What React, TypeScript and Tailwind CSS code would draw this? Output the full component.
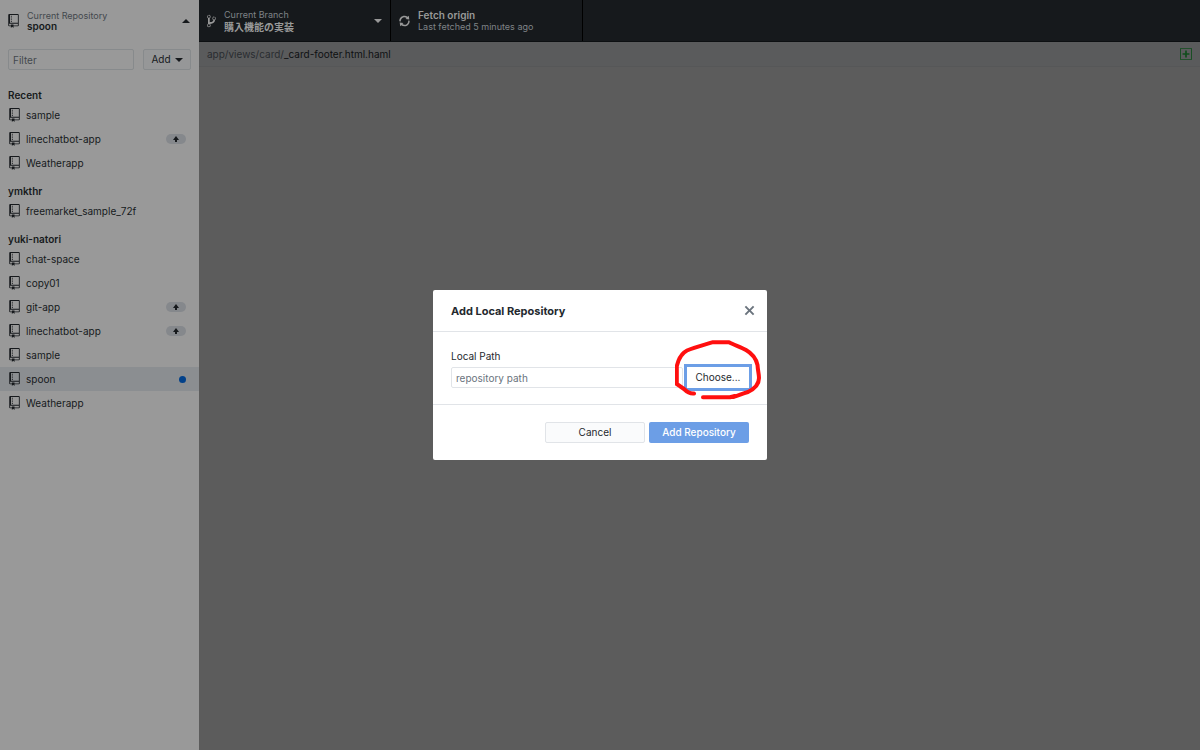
import { useState } from "react";
import { clsx } from "clsx";

type Repo = { name: string; ahead?: boolean; changed?: boolean };

const groups: { label: string; repos: Repo[] }[] = [
  {
    label: "Recent",
    repos: [{ name: "sample" }, { name: "linechatbot-app", ahead: true }, { name: "Weatherapp" }],
  },
  { label: "ymkthr", repos: [{ name: "freemarket_sample_72f" }] },
  {
    label: "yuki-natori",
    repos: [
      { name: "chat-space" },
      { name: "copy01" },
      { name: "git-app", ahead: true },
      { name: "linechatbot-app", ahead: true },
      { name: "sample" },
      { name: "spoon", changed: true },
      { name: "Weatherapp" },
    ],
  },
];

const icons = {
  repo: {
    box: "0 0 12 16",
    d: "M4 9H3V8h1v1zm0-3H3v1h1V6zm0-2H3v1h1V4zm0-2H3v1h1V2zm8-1v12c0 .55-.45 1-1 1H6v2l-1.5-1.5L3 16v-2H1c-.55 0-1-.45-1-1V1c0-.55.45-1 1-1h10c.55 0 1 .45 1 1zm-1 10H1v2h2v-1h3v1h5v-2zm0-10H2v9h9V1z",
  },
  branch: {
    box: "0 0 10 16",
    d: "M10 5c0-1.11-.89-2-2-2a1.993 1.993 0 0 0-1 3.72v.3c-.02.52-.23.98-.63 1.38-.4.4-.86.61-1.38.63-.83.02-1.48.16-2 .45V4.72a1.993 1.993 0 0 0-1-3.72C.88 1 0 1.89 0 3a2 2 0 0 0 1 1.72v6.56c-.59.35-1 .99-1 1.72 0 1.11.89 2 2 2 1.11 0 2-.89 2-2 0-.53-.2-1-.53-1.36.09-.06.48-.41.59-.47.25-.11.56-.17.94-.17 1.05-.05 1.95-.45 2.75-1.25S8.95 7.77 9 6.73h-.02C9.59 6.37 10 5.73 10 5zM2 1.8c.66 0 1.2.55 1.2 1.2 0 .65-.55 1.2-1.2 1.2C1.35 4.2.8 3.65.8 3c0-.65.55-1.2 1.2-1.2zm0 12.41c-.66 0-1.2-.55-1.2-1.2 0-.65.55-1.2 1.2-1.2.65 0 1.2.55 1.2 1.2 0 .65-.55 1.2-1.2 1.2zm6-8c-.66 0-1.2-.55-1.2-1.2 0-.65.55-1.2 1.2-1.2.65 0 1.2.55 1.2 1.2 0 .65-.55 1.2-1.2 1.2z",
  },
  sync: {
    box: "0 0 12 16",
    d: "M10.24 7.4a4.15 4.15 0 0 1-1.2 3.6 4.346 4.346 0 0 1-5.41.54L4.8 10.4.5 9.8l.6 4.2 1.31-1.26c2.36 1.74 5.7 1.57 7.84-.54a5.876 5.876 0 0 0 1.74-4.46l-1.75-.34zM2.96 5a4.346 4.346 0 0 1 5.41-.54L7.2 5.6l4.3.6-.6-4.2-1.31 1.26c-2.36-1.74-5.7-1.57-7.85.54C.5 5.03-.06 6.65.01 8.26l1.75.35A4.17 4.17 0 0 1 2.96 5z",
  },
  close: {
    box: "0 0 12 16",
    d: "M7.48 8l3.75 3.75-1.48 1.48L6 9.48l-3.75 3.75-1.48-1.48L4.52 8 .77 4.25l1.48-1.48L6 6.52l3.75-3.75 1.48 1.48L7.48 8z",
  },
  added: {
    box: "0 0 14 16",
    d: "M13 1H1c-.55 0-1 .45-1 1v12c0 .55.45 1 1 1h12c.55 0 1-.45 1-1V2c0-.55-.45-1-1-1zm0 13H1V2h12v12zM6 9H3V7h3V4h2v3h3v2H8v3H6V9z",
  },
  arrowUp: { box: "0 0 6 6", d: "M3 0L0 4h2v2h2V4h2L3 0z" },
  caretDown: { box: "0 0 8 4", d: "M0 0l4 4 4-4z" },
  caretUp: { box: "0 0 8 4", d: "M0 4l4-4 4 4z" },
};

const Icon = ({ name, className }: { name: keyof typeof icons; className?: string }) => (
  <svg viewBox={icons[name].box} className={clsx("shrink-0 fill-current", className)} aria-hidden="true">
    <path d={icons[name].d} />
  </svg>
);

const Sidebar = () => {
  const [filter, setFilter] = useState("");

  return (
    <aside className="w-[199px] shrink-0 bg-[#999999] text-[#16191c]">
      <button className="flex h-[41px] w-full items-center pl-2 pr-[9px] text-left">
        <Icon name="repo" className="h-[14px] w-[11px]" />
        <span className="ml-2 flex-1 leading-[11px]">
          <span className="block text-[9px] text-[#43484d]">Current Repository</span>
          <span className="block font-semibold">spoon</span>
        </span>
        <Icon name="caretUp" className="h-1 w-2" />
      </button>

      <div className="flex gap-[9px] px-2 pt-2">
        <input
          aria-label="Filter"
          placeholder="Filter"
          value={filter}
          onChange={(e) => setFilter(e.target.value)}
          className="h-[21px] min-w-0 flex-1 rounded-xs border border-[#878a8c] px-1 placeholder:text-[#43484d] focus:outline-none"
        />
        <button className="flex h-[21px] w-12 items-center justify-center gap-1 rounded-xs border border-[#878a8c] bg-[#969798]">
          Add
          <Icon name="caretDown" className="h-1 w-2" />
        </button>
      </div>

      <div className="pt-[9px]">
        {groups.map((group) => (
          <section key={group.label}>
            <h2 className="flex h-6 items-end px-2 font-semibold">{group.label}</h2>
            <ul>
              {group.repos
                .filter((repo) => repo.name.includes(filter))
                .map((repo) => (
                  <li key={repo.name}>
                    <button
                      className={clsx(
                        "flex h-6 w-full items-center pl-[9px] pr-[13px] text-left",
                        repo.changed && "bg-[#8b8e91]"
                      )}
                    >
                      <Icon name="repo" className="h-[14px] w-[11px]" />
                      <span className="ml-[6px] flex-1">{repo.name}</span>
                      {repo.ahead && (
                        <span className="flex h-[10px] w-5 items-center justify-center rounded-full bg-[#85888c]">
                          <Icon name="arrowUp" className="h-[6px] w-[6px]" />
                        </span>
                      )}
                      {repo.changed && <span className="h-[7px] w-[7px] rounded-full bg-[#02418a]" />}
                    </button>
                  </li>
                ))}
            </ul>
          </section>
        ))}
      </div>
    </aside>
  );
};

const Toolbar = () => (
  <header className="flex h-[42px] border-b border-[#0d1012] bg-[#16191c] text-[#999999]">
    <button className="flex w-48 items-center border-r border-black px-2 text-left">
      <Icon name="branch" className="h-[14px] w-[9px]" />
      <span className="ml-2 flex-1 leading-[13px]">
        <span className="block text-[9px] text-[#7f8387]">Current Branch</span>
        <span className="block font-bold">購入機能の実装</span>
      </span>
      <Icon name="caretDown" className="h-1 w-2" />
    </button>
    <button className="flex w-48 items-center border-r border-black pl-2 text-left">
      <Icon name="sync" className="h-[14px] w-[11px]" />
      <span className="ml-2 leading-3">
        <span className="block font-semibold">Fetch origin</span>
        <span className="block text-[9px] text-[#7f8387]">Last fetched 5 minutes ago</span>
      </span>
    </button>
  </header>
);

const AddRepositoryDialog = () => {
  const [path, setPath] = useState("");

  return (
    <div
      role="dialog"
      aria-labelledby="dialog-title"
      className="relative w-[334px] rounded-xs bg-white text-[#24292e]"
    >
      <div className="flex h-[42px] items-center justify-between border-b border-[#e1e4e8] pl-[18px] pr-3">
        <h1 id="dialog-title" className="pt-px text-[11px] font-bold">
          Add Local Repository
        </h1>
        <button aria-label="Close" className="text-[#6a737d]">
          <Icon name="close" className="h-[15px] w-[11px]" />
        </button>
      </div>

      <div className="h-[73px] border-b border-[#e1e4e8] px-[18px] pt-[18px]">
        <label htmlFor="local-path" className="block leading-3">
          Local Path
        </label>
        <div className="mt-[5px] flex gap-1">
          <input
            id="local-path"
            placeholder="repository path"
            value={path}
            onChange={(e) => setPath(e.target.value)}
            className="h-[21px] min-w-0 flex-1 rounded-xs border border-[#e1e4e8] px-1 placeholder:text-[#6a737d] focus:outline-none"
          />
          <button className="h-[21px] w-[62px] ring-3 ring-[#6c9ee6]">Choose...</button>
        </div>
      </div>

      <div className="flex h-[55px] items-center justify-end gap-1 px-[18px]">
        <button className="h-[21px] w-[100px] rounded-xs border border-[#e1e4e8] bg-[#fafbfc]">Cancel</button>
        <button disabled={!path} className="h-[21px] w-[100px] rounded-xs bg-[#6c9ee6] font-medium text-white">
          Add Repository
        </button>
      </div>

      {/* Hand-drawn marker around the Choose button */}
      <svg
        viewBox="0 0 86 60"
        className="pointer-events-none absolute right-[6px] top-[50px] h-[60px] w-[86px] fill-none stroke-[#ff0f0f]"
        strokeWidth="4"
        strokeLinecap="round"
        strokeLinejoin="round"
        aria-hidden="true"
      >
        <path d="M19 53.500C15 54 12 52 9 49L1.800 44V26C4 17 7 13 12 10.500C20 7 29 5 38 2.200H54C59 5 66 7 71 10C78 14 81 18 82.500 25C83 32 84 34 84 38C84 45 79 49 73 52C66 54 63 56 58 57" />
        <path d="M28 57.300H55L60 56" />
      </svg>
    </div>
  );
};

const App = () => (
  <div className="grid min-h-screen font-['Inter','Noto_Sans_CJK_JP',sans-serif] text-[10px]">
    <div className="col-start-1 row-start-1 flex">
      <Sidebar />
      <main className="flex-1 bg-[#5c5c5c]">
        <Toolbar />
        <div className="flex h-[25px] items-center justify-between border-b border-[#565758] bg-[#5a5b5c] px-2">
          <p className="text-[#292c30]">
            app/views/card/<span className="text-[#0e1012]">_card-footer.html.haml</span>
          </p>
          <Icon name="added" className="h-[14px] w-3 text-[#104d1c]" />
        </div>
      </main>
    </div>
    <div className="z-10 col-start-1 row-start-1 self-center justify-self-center">
      <AddRepositoryDialog />
    </div>
  </div>
);

export default App;
